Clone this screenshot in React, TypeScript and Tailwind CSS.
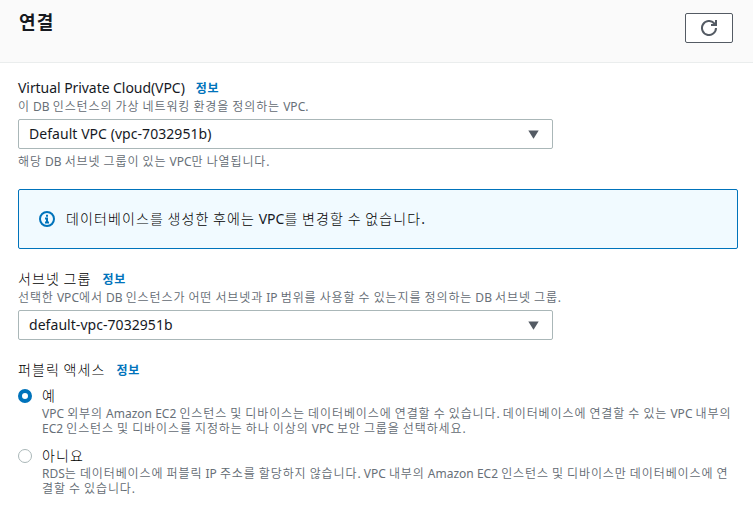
import type { ReactNode } from 'react';

/** Sets Hangul runs a little wider and lighter than the Latin text around them. */
function Ko({ text, hangul }: { text: string; hangul: string }) {
  return (
    <>
      {text.split(/([가-힣]+)/).map((part, i) =>
        i % 2 ? (
          <span key={i} className={hangul}>
            {part}
          </span>
        ) : (
          part
        ),
      )}
    </>
  );
}

const BODY = 'tracking-[1.1px] font-light text-black';
const SMALL = 'tracking-[0.89px] font-[350] text-[#626a72]';

function Label({ children }: { children: string }) {
  return (
    <div className="flex h-5 items-center whitespace-pre text-[14px] leading-5 text-[#16191f]">
      <span className="tracking-[-0.06px]">
        <Ko text={children} hangul={BODY} />
      </span>
      <a className="ml-[11px] pt-px text-[12px] font-bold tracking-[0.6px] text-[#0073bb]">정보</a>
    </div>
  );
}

function Small({ children }: { children: string }) {
  return (
    <p className="h-[15px] whitespace-pre text-[12px] leading-[15px] text-[#687078]">
      <Ko text={children} hangul={SMALL} />
    </p>
  );
}

function Select({ value }: { value: string }) {
  return (
    <div className="flex h-[30px] w-[535px] items-center justify-between rounded-[2px] border border-[#aab7b8] bg-white pl-[10px] pr-[13px] text-[14px] leading-5 tracking-[0.05px] text-[#16191f]">
      <span>{value}</span>
      <svg width="11" height="9" viewBox="0 0 11 9" fill="#545b64">
        <path d="M0.3 0.5h10.4L5.5 8.7z" />
      </svg>
    </div>
  );
}

function Option({ title, checked, children }: { title: string; checked?: boolean; children: ReactNode }) {
  return (
    <div className="flex h-[60px]">
      <span
        className={
          checked
            ? 'mt-[3px] size-[14px] rounded-full border-4 border-[#0073bb] bg-white'
            : 'mt-[3px] size-[14px] rounded-full border border-[#aab7b8] bg-white'
        }
      />
      <div className="ml-[10px]">
        <p className="h-5 text-[14px] leading-5 text-[#16191f]">
          <Ko text={title} hangul={BODY} />
        </p>
        {children}
      </div>
    </div>
  );
}

export default function App() {
  return (
    <div className="h-[505px] w-[753px] overflow-hidden bg-white font-['Noto_Sans','Noto_Sans_CJK_KR',sans-serif]">
      <header className="flex h-[63px] items-start justify-between border-b border-[#eaeded] bg-[#fafafa] pl-[19px] pr-[20px]">
        <h2 className="mt-[9px] text-[18px] font-bold leading-[26px] tracking-[1.2px] text-[#16191f]">연결</h2>
        <button className="mt-[13px] flex h-[30px] w-[48px] items-center justify-center rounded-[2px] border border-[#545b64] bg-white">
          <svg width="16" height="16" viewBox="0 0 16 16" fill="none" stroke="#545b64" strokeWidth="2">
            <path d="M15 8a7 7 0 1 1-1.9-4.8L14.5 4.5" />
            <path d="M10 5h5V0" />
          </svg>
        </button>
      </header>
      <main className="pl-[18px] pt-[15px]">
        <Label>Virtual Private Cloud(VPC)</Label>
        <div className="pt-px">
          <Small>이 DB 인스턴스의 가상 네트워킹 환경을 정의하는 VPC.</Small>
        </div>
        <div className="mt-[5px]">
          <Select value="Default VPC (vpc-7032951b)" />
        </div>
        <div className="mt-[5px]">
          <Small>해당 DB 서브넷 그룹이 있는 VPC만 나열됩니다.</Small>
        </div>
        <div className="mt-[20px] flex h-[60px] w-[720px] items-center rounded-[2px] border border-[#0073bb] bg-[#f1faff] pl-[20px] text-[14px] leading-5 text-[#16191f]">
          <svg width="16" height="16" viewBox="0 0 16 16" fill="none" stroke="#0073bb" strokeWidth="2">
            <circle cx="8" cy="8" r="7" />
            <path d="M8 3.7v2M6 7.5h2v4M6 11.5h4" />
          </svg>
          <span className="ml-[11px] whitespace-pre">
            <Ko text="데이터베이스를 생성한 후에는 VPC를 변경할 수 없습니다." hangul={BODY} />
          </span>
        </div>
        <div className="mt-[20px]">
          <Label>서브넷 그룹</Label>
          <div className="pt-px">
            <Small>선택한 VPC에서 DB 인스턴스가 어떤 서브넷과 IP 범위를 사용할 수 있는지를 정의하는 DB 서브넷 그룹.</Small>
          </div>
          <div className="mt-[5px]">
            <Select value="default-vpc-7032951b" />
          </div>
        </div>
        <div className="mt-[20px]">
          <Label>퍼블릭 액세스</Label>
          <div className="mt-[6px]">
            <Option title="예" checked>
              <Small>VPC 외부의 Amazon EC2 인스턴스 및 디바이스는 데이터베이스에 연결할 수 있습니다. 데이터베이스에 연결할 수 있는 VPC 내부의</Small>
              <Small>EC2 인스턴스 및 디바이스를 지정하는 하나 이상의 VPC 보안 그룹을 선택하세요.</Small>
            </Option>
            <Option title="아니요">
              <Small>RDS는 데이터베이스에 퍼블릭 IP 주소를 할당하지 않습니다. VPC 내부의 Amazon EC2 인스턴스 및 디바이스만 데이터베이스에 연</Small>
              <Small>결할 수 있습니다.</Small>
            </Option>
          </div>
        </div>
      </main>
    </div>
  );
}
